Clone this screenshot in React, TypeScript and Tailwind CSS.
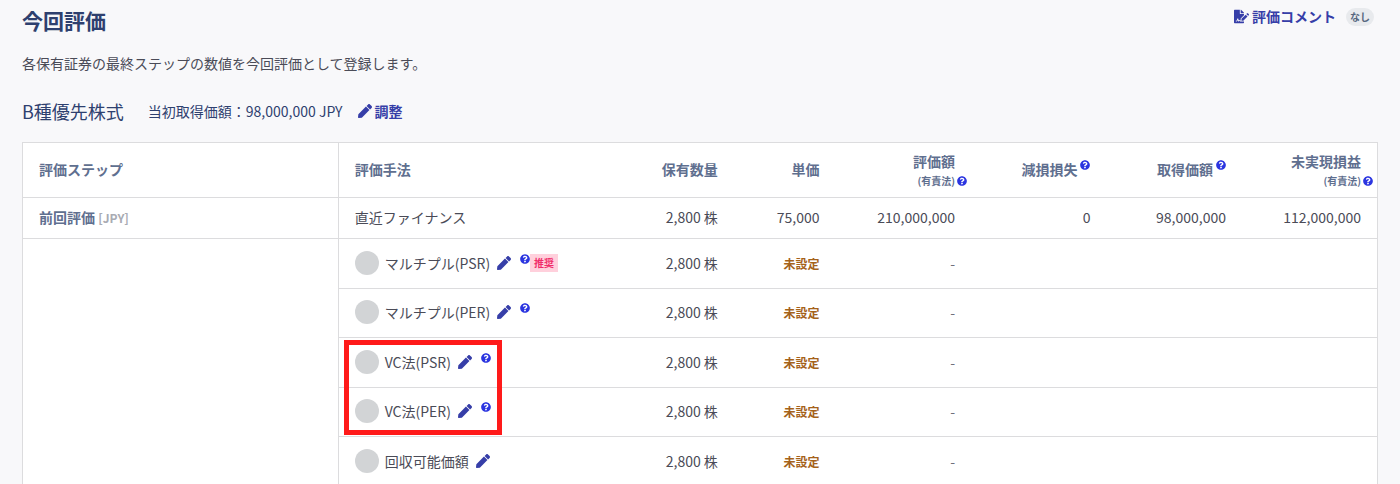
import { FaFileSignature, FaPen, FaQuestionCircle } from "react-icons/fa"

type Method = {
  id: string
  name: string
  help: boolean
  recommended?: boolean
  marked?: boolean
}

const methods: Method[] = [
  { id: "multiple-psr", name: "マルチプル(PSR)", help: true, recommended: true },
  { id: "multiple-per", name: "マルチプル(PER)", help: true },
  { id: "vc-psr", name: "VC法(PSR)", help: true, marked: true },
  { id: "vc-per", name: "VC法(PER)", help: true },
  { id: "recoverable", name: "回収可能価額", help: false },
]

const HelpButton = () => (
  <button type="button" aria-label="ヘルプ" className="block text-[#2b35e0]">
    <FaQuestionCircle size={10} />
  </button>
)

const HeadCell = ({ title, help = false }: { title: string; help?: boolean }) => (
  <th scope="col" className="px-4 pb-0.5 text-right font-bold">
    <div className="flex items-center justify-end gap-[3px]">
      {title}
      {help && (
        <span className="mb-2">
          <HelpButton />
        </span>
      )}
    </div>
  </th>
)

// 見出しの下に評価方式を添える列
const HeadCellWithNote = ({ title, note }: { title: string; note: string }) => (
  <th scope="col" className="px-4 pt-0.5 text-right font-bold">
    <div className="leading-5">{title}</div>
    <div className="relative text-[10px] leading-5">
      {note}
      <span className="absolute top-[5px] left-full ml-0.5">
        <HelpButton />
      </span>
    </div>
  </th>
)

const MethodRow = ({ method, first }: { method: Method; first: boolean }) => (
  <tr className="border-t border-[#dcdcde] odd:h-[49px] even:h-[50px]">
    {first && <td rowSpan={methods.length} className="border-r border-[#dcdcde]" />}
    <td className="relative px-4 pb-0.5">
      <div className="flex items-center">
        <input
          type="radio"
          name="method"
          id={method.id}
          className="size-6 shrink-0 appearance-none rounded-full bg-[#d2d4d6]"
        />
        <label htmlFor={method.id} className="ml-1.5 whitespace-nowrap">{method.name}</label>
        <button type="button" aria-label="編集" className="ml-[7px] text-[#363ea8]">
          <FaPen size={14} />
        </button>
        {method.help && (
          <span className="mb-2 ml-[9px]">
            <HelpButton />
          </span>
        )}
        {method.recommended && (
          <span className="bg-[#ffd0dc] px-1 text-[10px] leading-[18px] font-bold text-[#f02c6a]">推奨</span>
        )}
      </div>
      {method.marked && (
        <div className="pointer-events-none absolute top-0.5 left-[5px] z-10 h-[95px] w-[158px] border-5 border-[#ff1a1a]" />
      )}
    </td>
    <td className="px-4 pb-0.5 text-right whitespace-nowrap">2,800 株</td>
    <td className="px-4 text-right text-xs font-bold text-[#a5621a]">未設定</td>
    <td className="px-4 pb-0.5 text-right text-[#6f707b]">-</td>
    <td />
    <td />
    <td />
  </tr>
)

export default function App() {
  return (
    <main className="h-screen overflow-hidden bg-[#f8f8fa] px-[22px] pt-1.5 font-['Noto_Sans_CJK_JP',sans-serif] text-sm leading-5 text-[#4a4b57]">
      <header className="flex items-start justify-between">
        <h1 className="text-[21px] leading-7 font-bold text-[#2e406f]">今回評価</h1>
        <div className="flex items-end gap-2.5 pr-1">
          <button type="button" className="flex items-center gap-[3px] font-bold text-[#363ea8]">
            <FaFileSignature size={15} />
            評価コメント
          </button>
          <span className="rounded-full bg-[#e8eaed] px-1 text-[10px] leading-[18px] font-bold text-[#56677f]">なし</span>
        </div>
      </header>

      <p className="mt-[19px]">各保有証券の最終ステップの数値を今回評価として登録します。</p>

      <div className="mt-7 flex items-center text-[#2e406f]">
        <h2 className="text-lg leading-5">B種優先株式</h2>
        <span className="ml-6">当初取得価額：98,000,000 JPY</span>
        <button type="button" className="ml-[15px] flex items-center gap-[3px] font-bold text-[#363ea8]">
          <FaPen size={14} />
          調整
        </button>
      </div>

      <table className="mt-[21px] w-full table-fixed border-collapse border border-[#dcdcde] bg-white">
        <colgroup>
          <col className="w-[23.3%]" />
          <col className="w-[21.7%]" />
          <col className="w-[7.5%]" />
          <col className="w-[7.5%]" />
          <col className="w-[10%]" />
          <col className="w-[10%]" />
          <col className="w-[10%]" />
          <col className="w-[10%]" />
        </colgroup>
        <thead>
          <tr className="h-[55px] whitespace-nowrap text-[#5f6f8f]">
            <th scope="col" className="border-r border-[#dcdcde] px-4 pb-0.5 text-left font-bold">評価ステップ</th>
            <th scope="col" className="px-4 pb-0.5 text-left font-bold">評価手法</th>
            <HeadCell title="保有数量" />
            <HeadCell title="単価" />
            <HeadCellWithNote title="評価額" note="(有責法)" />
            <HeadCell title="減損損失" help />
            <HeadCell title="取得価額" help />
            <HeadCellWithNote title="未実現損益" note="(有責法)" />
          </tr>
        </thead>
        <tbody>
          <tr className="h-[41px] border-t border-[#dcdcde]">
            <th scope="row" className="border-r border-[#dcdcde] px-4 pb-0.5 text-left font-bold text-[#5f6f8f]">
              前回評価 <span className="text-xs text-[#a9abb3]">[JPY]</span>
            </th>
            <td className="px-4 pb-0.5">直近ファイナンス</td>
            <td className="px-4 pb-0.5 text-right">2,800 株</td>
            <td className="px-4 pb-0.5 text-right">75,000</td>
            <td className="px-4 pb-0.5 text-right">210,000,000</td>
            <td className="px-4 pb-0.5 text-right">0</td>
            <td className="px-4 pb-0.5 text-right">98,000,000</td>
            <td className="px-4 pb-0.5 text-right">112,000,000</td>
          </tr>
          {methods.map((method, i) => (
            <MethodRow key={method.id} method={method} first={i === 0} />
          ))}
        </tbody>
      </table>
    </main>
  )
}
